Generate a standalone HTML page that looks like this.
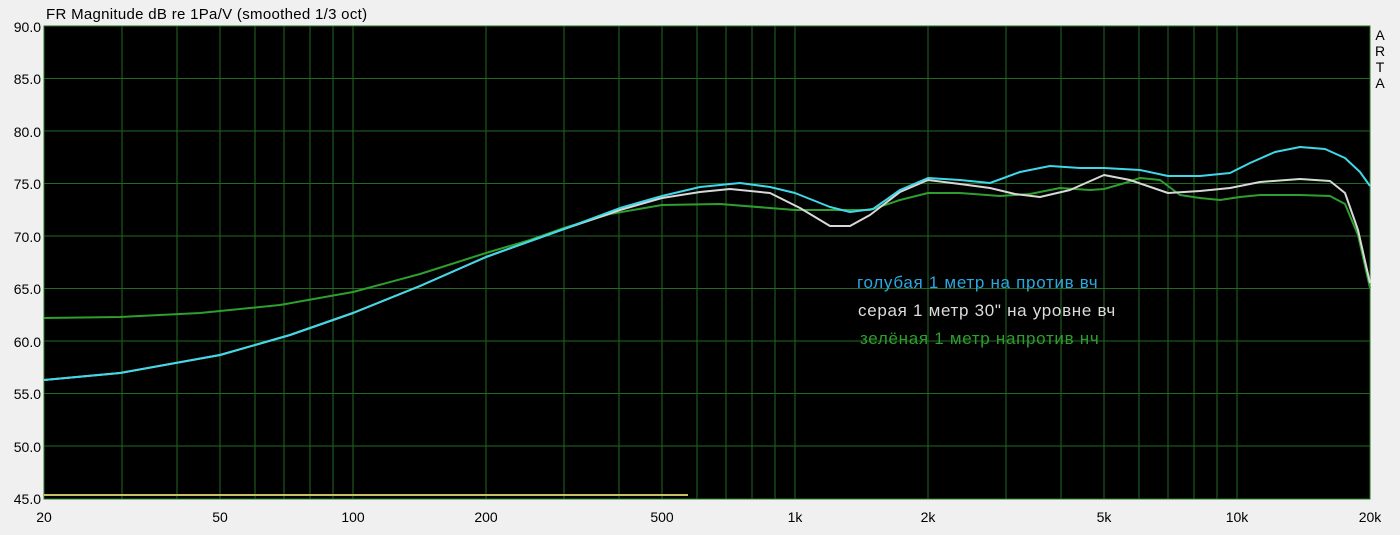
<!DOCTYPE html>
<html><head><meta charset="utf-8"><style>
body{margin:0;background:#f0f0f0;width:1400px;height:530px;overflow:hidden;font-family:"Liberation Sans",sans-serif}
</style></head><body>
<svg width="1400" height="530" xmlns="http://www.w3.org/2000/svg" font-family="Liberation Sans, DejaVu Sans, sans-serif">
<rect width="1400" height="530" fill="#f0f0f0"/>
<text x="46" y="19" font-size="15" letter-spacing="0.3" fill="#000">FR Magnitude dB re 1Pa/V (smoothed 1/3 oct)</text>
<rect x="44" y="26" width="1326" height="473" fill="#000" stroke="#1f7a1f" stroke-width="1"/>
<g stroke="#1f6a1f" stroke-width="1">
<line x1="44" x2="1370" y1="78.5" y2="78.5"/><line x1="44" x2="1370" y1="131" y2="131"/><line x1="44" x2="1370" y1="183.5" y2="183.5"/><line x1="44" x2="1370" y1="236" y2="236"/><line x1="44" x2="1370" y1="288.5" y2="288.5"/><line x1="44" x2="1370" y1="341" y2="341"/><line x1="44" x2="1370" y1="393.5" y2="393.5"/><line x1="44" x2="1370" y1="446" y2="446"/>
<line y1="26" y2="499" x1="122" x2="122"/><line y1="26" y2="499" x1="177" x2="177"/><line y1="26" y2="499" x1="220" x2="220"/><line y1="26" y2="499" x1="255" x2="255"/><line y1="26" y2="499" x1="284" x2="284"/><line y1="26" y2="499" x1="310" x2="310"/><line y1="26" y2="499" x1="333" x2="333"/><line y1="26" y2="499" x1="353" x2="353"/>
<line y1="26" y2="499" x1="486" x2="486"/><line y1="26" y2="499" x1="564" x2="564"/><line y1="26" y2="499" x1="619" x2="619"/><line y1="26" y2="499" x1="662" x2="662"/><line y1="26" y2="499" x1="697" x2="697"/><line y1="26" y2="499" x1="726" x2="726"/><line y1="26" y2="499" x1="752" x2="752"/><line y1="26" y2="499" x1="775" x2="775"/><line y1="26" y2="499" x1="795" x2="795"/>
<line y1="26" y2="499" x1="928" x2="928"/><line y1="26" y2="499" x1="1006" x2="1006"/><line y1="26" y2="499" x1="1061" x2="1061"/><line y1="26" y2="499" x1="1104" x2="1104"/><line y1="26" y2="499" x1="1139" x2="1139"/><line y1="26" y2="499" x1="1168" x2="1168"/><line y1="26" y2="499" x1="1194" x2="1194"/><line y1="26" y2="499" x1="1217" x2="1217"/><line y1="26" y2="499" x1="1237" x2="1237"/>
</g>
<line x1="44" x2="688" y1="495" y2="495" stroke="#c8c060" stroke-width="2"/>
<g fill="none" stroke-width="2" stroke-linejoin="round">
<polyline stroke="#2e9e2e" points="44,318 120,317 200,313 280,305 353,292 420,274 486,253 530,240 564,228 610,214 662,205 720,204 795,210 870,210 900,200 928,193 960,193 1000,196 1030,194 1060,188 1090,190 1104,189 1125,183 1140,178 1160,180 1180,195 1200,198 1220,200 1240,197 1260,195 1300,195 1330,196 1345,204 1358,235 1370,288"/>
<polyline stroke="#d8d8d8" points="44,380 120,373 220,355 290,335 353,313 420,286 486,257 564,229 620,210 662,198 700,192 730,189 770,193 800,208 830,226 850,226 870,215 900,192 928,180 960,184 990,188 1015,194 1040,197 1070,190 1104,175 1130,180 1168,193 1200,191 1230,188 1260,182 1300,179 1330,181 1345,193 1358,230 1370,283"/>
<polyline stroke="#3fd8e8" points="44,380 120,373 220,355 290,335 353,313 420,286 486,257 564,229 620,208 662,196 700,187 740,183 770,187 795,193 830,207 850,212 873,209 900,190 928,178 960,180 990,183 1020,172 1050,166 1080,168 1104,168 1140,170 1168,176 1200,176 1230,173 1250,163 1275,152 1300,147 1325,149 1345,158 1360,172 1370,186"/>
</g>
<g font-size="14" fill="#000" text-anchor="end">
<text x="41" y="32">90.0</text><text x="41" y="84">85.0</text><text x="41" y="137">80.0</text><text x="41" y="189">75.0</text><text x="41" y="242">70.0</text><text x="41" y="294">65.0</text><text x="41" y="347">60.0</text><text x="41" y="399">55.0</text><text x="41" y="452">50.0</text><text x="41" y="504">45.0</text>
</g>
<g font-size="14" fill="#000" text-anchor="middle">
<text x="44" y="522">20</text><text x="220" y="522">50</text><text x="353" y="522">100</text><text x="486" y="522">200</text><text x="662" y="522">500</text><text x="795" y="522">1k</text><text x="928" y="522">2k</text><text x="1104" y="522">5k</text><text x="1237" y="522">10k</text><text x="1370" y="522">20k</text>
</g>
<g font-size="14" fill="#000" text-anchor="middle"><text x="1380" y="40">A</text><text x="1380" y="56">R</text><text x="1380" y="72">T</text><text x="1380" y="88">A</text></g>
<g font-size="17" letter-spacing="0.7">
<text x="857" y="288" fill="#2aa8e0">голубая 1 метр на против вч</text>
<text x="858" y="316" fill="#dcdcdc">серая 1 метр 30" на уровне вч</text>
<text x="860" y="344" fill="#2e9e2e">зелёная 1 метр напротив нч</text>
</g>
</svg>
</body></html>
